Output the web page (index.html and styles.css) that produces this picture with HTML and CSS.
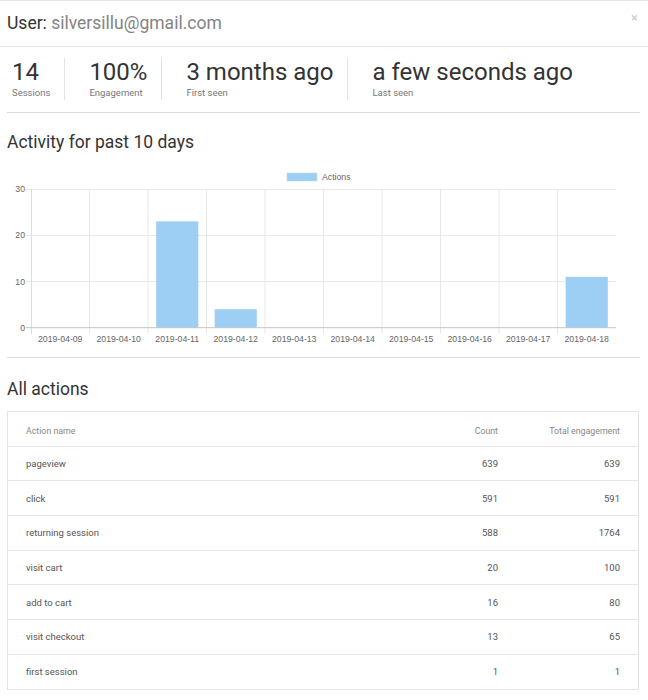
FILE: index.html
```html
<!DOCTYPE html>
<html>
<head>
<meta charset="utf-8">
<link rel="stylesheet" href="styles.css">
</head>
<body>
<div class="modal">
  <div class="header">
    <div class="title"><span class="lbl">User:</span> <span class="email">silversillu@gmail.com</span></div>
    <div class="close">×</div>
  </div>
  <div class="content">
    <div class="stats">
      <div class="stat"><div class="num">14</div><div class="cap">Sessions</div></div>
      <div class="stat"><div class="num">100%</div><div class="cap">Engagement</div></div>
      <div class="stat"><div class="num">3 months ago</div><div class="cap">First seen</div></div>
      <div class="stat"><div class="num">a few seconds ago</div><div class="cap">Last seen</div></div>
    </div>
    <h2 class="section-title first">Activity for past 10 days</h2>
    <div class="chart">
      <svg class="chart-svg" width="634" height="204" viewBox="0 0 634 204" xmlns="http://www.w3.org/2000/svg">
        <g font-family="Liberation Sans, Arial, sans-serif" font-size="8.7" fill="#666">
          <rect x="280" y="20" width="30" height="8" fill="#9ccff3" stroke="#b8dcf6" stroke-width="0.5"/>
          <text x="315" y="27.2">Actions</text>
        </g>
        <g stroke="#e8e8e8" stroke-width="1">
          <line x1="19" y1="36.5" x2="609" y2="36.5"/>
          <line x1="19" y1="82.5" x2="609" y2="82.5"/>
          <line x1="19" y1="128.5" x2="609" y2="128.5"/>
          <line x1="82.5" y1="36" x2="82.5" y2="181"/>
          <line x1="141" y1="36" x2="141" y2="181"/>
          <line x1="199.5" y1="36" x2="199.5" y2="181"/>
          <line x1="258" y1="36" x2="258" y2="181"/>
          <line x1="316.5" y1="36" x2="316.5" y2="181"/>
          <line x1="375" y1="36" x2="375" y2="181"/>
          <line x1="433.5" y1="36" x2="433.5" y2="181"/>
          <line x1="492" y1="36" x2="492" y2="181"/>
          <line x1="550.5" y1="36" x2="550.5" y2="181"/>
        </g>
        <line x1="24.5" y1="36" x2="24.5" y2="181" stroke="#dcdcdc"/>
        <g fill="#9ccff3">
          <rect x="149.19" y="68.36" width="42.12" height="106.34"/>
          <rect x="207.69" y="156.21" width="42.12" height="18.49"/>
          <rect x="558.69" y="123.84" width="42.12" height="50.86"/>
        </g>
        <line x1="19" y1="174.7" x2="609" y2="174.7" stroke="#c4c4c4"/>
        <g font-family="Liberation Sans, Arial, sans-serif" font-size="8.7" fill="#666" text-anchor="end">
          <text x="18" y="39">30</text>
          <text x="18" y="85.2">20</text>
          <text x="18" y="131.5">10</text>
          <text x="18" y="177.7">0</text>
        </g>
        <g font-family="Liberation Sans, Arial, sans-serif" font-size="8.7" fill="#666" text-anchor="middle">
          <text x="53.25" y="189">2019-04-09</text>
          <text x="111.75" y="189">2019-04-10</text>
          <text x="170.25" y="189">2019-04-11</text>
          <text x="228.75" y="189">2019-04-12</text>
          <text x="287.25" y="189">2019-04-13</text>
          <text x="345.75" y="189">2019-04-14</text>
          <text x="404.25" y="189">2019-04-15</text>
          <text x="462.75" y="189">2019-04-16</text>
          <text x="521.25" y="189">2019-04-17</text>
          <text x="579.75" y="189">2019-04-18</text>
        </g>
      </svg>
    </div>
    <h2 class="section-title second">All actions</h2>
    <div class="table">
      <div class="row head"><div>Action name</div><div class="r">Count</div><div class="r">Total engagement</div></div>
      <div class="row"><div>pageview</div><div class="r">639</div><div class="r">639</div></div>
      <div class="row"><div>click</div><div class="r">591</div><div class="r">591</div></div>
      <div class="row"><div>returning session</div><div class="r">588</div><div class="r">1764</div></div>
      <div class="row"><div>visit cart</div><div class="r">20</div><div class="r">100</div></div>
      <div class="row"><div>add to cart</div><div class="r">16</div><div class="r">80</div></div>
      <div class="row"><div>visit checkout</div><div class="r">13</div><div class="r">65</div></div>
      <div class="row last"><div>first session</div><div class="r">1</div><div class="r">1</div></div>
    </div>
  </div>
</div>
</body>
</html>
```
FILE: styles.css
```css
html, body {
  margin: 0;
  padding: 0;
  background: #fff;
}
body {
  font-family: Roboto, "Liberation Sans", Arial, sans-serif;
  color: #333;
  border-top: 1px solid #e6e6ea;
}
.modal {
  width: 648px;
}
.header {
  height: 45px;
  border-bottom: 1px solid #e5e5e5;
  display: flex;
  justify-content: space-between;
  align-items: flex-start;
  padding: 0 10px 0 7px;
}
.title {
  font-size: 17.5px;
  line-height: 45px;
  color: #333;
}
.email {
  color: #848484;
}
.close {
  font-size: 13px;
  line-height: 13px;
  color: #c8c8c8;
  margin-top: 10px;
}
.content {
  padding: 0 8px 0 7px;
}
.stats {
  display: flex;
  margin-top: 11px;
  padding-bottom: 12px;
  border-bottom: 1px solid #dcdcdc;
}
.stat {
  height: 42px;
  padding: 0 14px 0 24px;
  border-left: 1px solid #e3e3e3;
}
.stat:first-child {
  padding-left: 5px;
  border-left: none;
}
.num {
  font-size: 24px;
  line-height: 28px;
  color: #333;
}
.cap {
  font-size: 9.5px;
  line-height: 14px;
  color: #777;
}
.section-title {
  font-size: 17.5px;
  line-height: 22px;
  font-weight: normal;
  color: #333;
  margin: 0;
}
.section-title.first {
  margin-top: 18px;
}
.chart {
  height: 204px;
  border-bottom: 1px solid #dcdcdc;
}
.chart-svg {
  display: block;
}
.section-title.second {
  margin-top: 20px;
}
.table {
  margin-top: 11px;
  border: 1px solid #e3e3e3;
  border-bottom: none;
  width: 630px;
}
.row {
  display: grid;
  grid-template-columns: 1fr 100px 122px;
  height: 33.7px;
  align-items: center;
  border-bottom: 1px solid #e6e6e6;
  font-size: 9.5px;
  color: #555;
}
.row > div {
  padding: 0 18px;
}
.row.head {
  font-size: 8.8px;
  color: #888;
  padding-top: 5px;
  height: 28.7px;
}
.r {
  text-align: right;
}
```
